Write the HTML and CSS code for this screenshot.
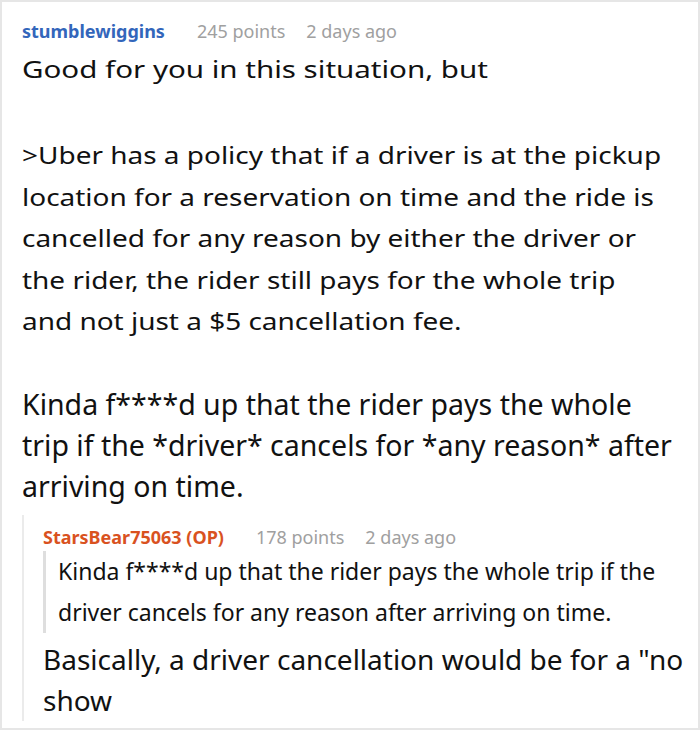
FILE: index.html
```html
<!DOCTYPE html>
<html>
<head>
<meta charset="utf-8">
<link rel="stylesheet" href="styles.css">
</head>
<body>
<div class="card">
  <div class="meta">
    <span class="user user-blue">stumblewiggins</span>
    <span class="points">245 points</span>
    <span class="time">2 days ago</span>
  </div>
  <div class="body">
    <p class="para wide first"><span class="stretch">Good for you in this situation, but</span></p>
    <p class="para wide second"><span class="stretch stretch-2">&gt;Uber has a policy that if a driver is at the pickup<br>location for a reservation on time and the ride is<br>cancelled for any reason by either the driver or<br>the rider, the rider still pays for the whole trip<br>and not just a $5 cancellation fee.</span></p>
    <p class="para big">Kinda f****d up that the rider pays the whole<br>trip if the *driver* cancels for *any reason* after<br>arriving on time.</p>
  </div>
  <div class="reply">
    <div class="meta">
      <span class="user user-orange">StarsBear75063 (OP)</span>
      <span class="points">178 points</span>
      <span class="time">2 days ago</span>
    </div>
    <blockquote class="quote">Kinda f****d up that the rider pays the whole trip if the<br>driver cancels for any reason after arriving on time.</blockquote>
    <p class="reply-text">Basically, a driver cancellation would be for a "no<br>show</p>
  </div>
</div>
</body>
</html>
```

FILE: styles.css
```css
html, body {
  margin: 0;
  padding: 0;
  background: #fff;
}
body {
  font-family: "Noto Sans", "Open Sans", sans-serif;
  color: #111;
}
.card {
  box-sizing: border-box;
  width: 700px;
  height: 730px;
  border: 2px solid #e6e6e6;
  padding: 17px 0 0 20px;
  overflow: hidden;
}
.meta {
  display: flex;
  align-items: center;
  height: 24px;
  font-size: 18px;
  line-height: 24px;
  white-space: nowrap;
}
.user {
  font-weight: 700;
  margin-right: 32px;
}
.user-blue { color: #3366bb; }
.user-orange { color: #d9521f; }
.points {
  color: #a0a0a0;
  margin-right: 21px;
}
.time {
  color: #a0a0a0;
}
.body {
  margin-top: 5px;
}
.para {
  margin: 0;
  white-space: nowrap;
}
.wide {
  font-size: 24px;
  line-height: 41.5px;
}
.stretch {
  display: block;
  width: 526px;
  transform: scaleX(1.23);
  transform-origin: left top;
}
.stretch-2 {
  transform: scaleX(1.165);
}
.first {
  margin-bottom: 44.5px;
}
.second {
  margin-bottom: 42.75px;
}
.big {
  font-size: 28.5px;
  line-height: 41px;
}
.reply {
  margin-top: 7.5px;
  border-left: 2px solid #ebebeb;
  padding: 10px 0 0 19px;
}
.quote {
  margin: 2.5px 0 0 0;
  border-left: 3px solid #dedede;
  padding: 0 0 0 12px;
  font-size: 23px;
  line-height: 41px;
  white-space: nowrap;
}
.reply-text {
  margin: 6px 0 0 0;
  font-size: 28px;
  line-height: 41px;
  white-space: nowrap;
}
```
